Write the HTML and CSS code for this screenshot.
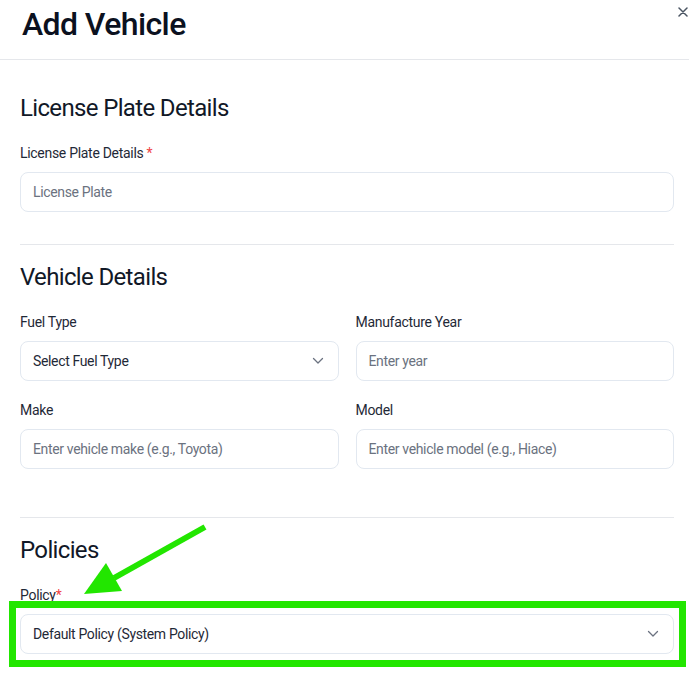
FILE: index.html
```html
<!DOCTYPE html>
<html lang="en">
<head>
<meta charset="utf-8">
<title>Add Vehicle</title>
<link rel="stylesheet" href="styles.css">
</head>
<body>
<div class="modal">
  <header class="modal-header">
    <h1 class="title">Add Vehicle</h1>
    <button class="close" aria-label="Close">
      <svg width="10" height="10" viewBox="0 0 10 10"><path d="M1 1L9 9M9 1L1 9" stroke="#4b5563" stroke-width="1.5" fill="none" stroke-linecap="round"/></svg>
    </button>
  </header>
  <main class="modal-body">
    <section class="section first">
      <h2 class="section-title">License Plate Details</h2>
      <div class="field">
        <label class="label">License Plate Details <span class="req">*</span></label>
        <div class="input placeholder">License Plate</div>
      </div>
    </section>
    <hr class="divider">
    <section class="section">
      <h2 class="section-title">Vehicle Details</h2>
      <div class="grid">
        <div class="field">
          <label class="label">Fuel Type</label>
          <div class="input select">
            <span>Select Fuel Type</span>
            <svg class="chev" width="12" height="8" viewBox="0 0 12 8"><path d="M1.5 1.5L6 6L10.5 1.5" stroke="#6b7280" stroke-width="1.3" fill="none" stroke-linecap="round" stroke-linejoin="round"/></svg>
          </div>
        </div>
        <div class="field">
          <label class="label">Manufacture Year</label>
          <div class="input placeholder">Enter year</div>
        </div>
        <div class="field">
          <label class="label">Make</label>
          <div class="input placeholder">Enter vehicle make (e.g., Toyota)</div>
        </div>
        <div class="field">
          <label class="label">Model</label>
          <div class="input placeholder">Enter vehicle model (e.g., Hiace)</div>
        </div>
      </div>
    </section>
    <hr class="divider wide">
    <section class="section">
      <h2 class="section-title">Policies</h2>
      <div class="field">
        <label class="label">Policy<span class="req">*</span></label>
        <div class="input select">
          <span>Default Policy (System Policy)</span>
          <svg class="chev" width="12" height="8" viewBox="0 0 12 8"><path d="M1.5 1.5L6 6L10.5 1.5" stroke="#6b7280" stroke-width="1.3" fill="none" stroke-linecap="round" stroke-linejoin="round"/></svg>
        </div>
      </div>
    </section>
  </main>
  <div class="highlight"></div>
  <svg class="arrow" width="140" height="90" viewBox="0 0 140 90">
    <path d="M125 7L34 58" stroke="#22e600" stroke-width="6" fill="none"/>
    <polygon points="4,74 26,43 42,71" fill="#22e600"/>
  </svg>
</div>
</body>
</html>
```
FILE: styles.css
```css
* { box-sizing: border-box; }
html, body { margin: 0; padding: 0; background: #ffffff; }
body {
  font-family: Roboto, "Noto Sans", Arial, sans-serif;
  color: #111827;
  width: 689px;
  height: 681px;
  overflow: hidden;
}
.modal { position: relative; width: 689px; height: 681px; }
.modal-header {
  height: 60px;
  border-bottom: 1px solid #e5e7eb;
  padding: 4px 0 0 22px;
  display: flex;
  justify-content: space-between;
  align-items: flex-start;
}
.title {
  margin: 0;
  font-size: 32px;
  line-height: 40px;
  font-weight: 500;
  color: #0b1120;
  letter-spacing: -0.6px;
}
.close {
  border: 0;
  background: none;
  padding: 0;
  margin: 3px 1px 0 0;
  width: 10px;
  height: 10px;
  display: flex;
}
.modal-body { padding: 16px 15px 0 20px; }
.section-title {
  margin: 16px 0 19px;
  font-size: 24px;
  line-height: 32px;
  font-weight: 400;
  color: #111827;
  letter-spacing: -0.65px;
}
.field { display: flex; flex-direction: column; }
.label {
  font-size: 14px;
  line-height: 20px;
  color: #1f2937;
  margin-bottom: 9px;
  letter-spacing: -0.3px;
}
.req { color: #ef4444; }
.input {
  height: 40px;
  border: 1px solid #e2e8f0;
  border-radius: 8px;
  padding: 0 12px;
  display: flex;
  align-items: center;
  font-size: 14px;
  color: #1f2937;
  letter-spacing: -0.35px;
}
.input.placeholder { color: #6b7280; }
.select { justify-content: space-between; padding-right: 14px; }
.chev { display: block; }
.grid {
  display: grid;
  grid-template-columns: 1fr 1fr;
  column-gap: 17px;
  row-gap: 19px;
}
.divider {
  border: 0;
  border-top: 1px solid #e5e7eb;
  margin: 32px 0 0;
  height: 0;
}
.divider.wide { margin-top: 48px; }
.highlight {
  position: absolute;
  left: 9px;
  top: 601px;
  width: 677px;
  height: 66px;
  border: 7px solid #22e600;
}
.arrow {
  position: absolute;
  left: 80px;
  top: 520px;
}
```
